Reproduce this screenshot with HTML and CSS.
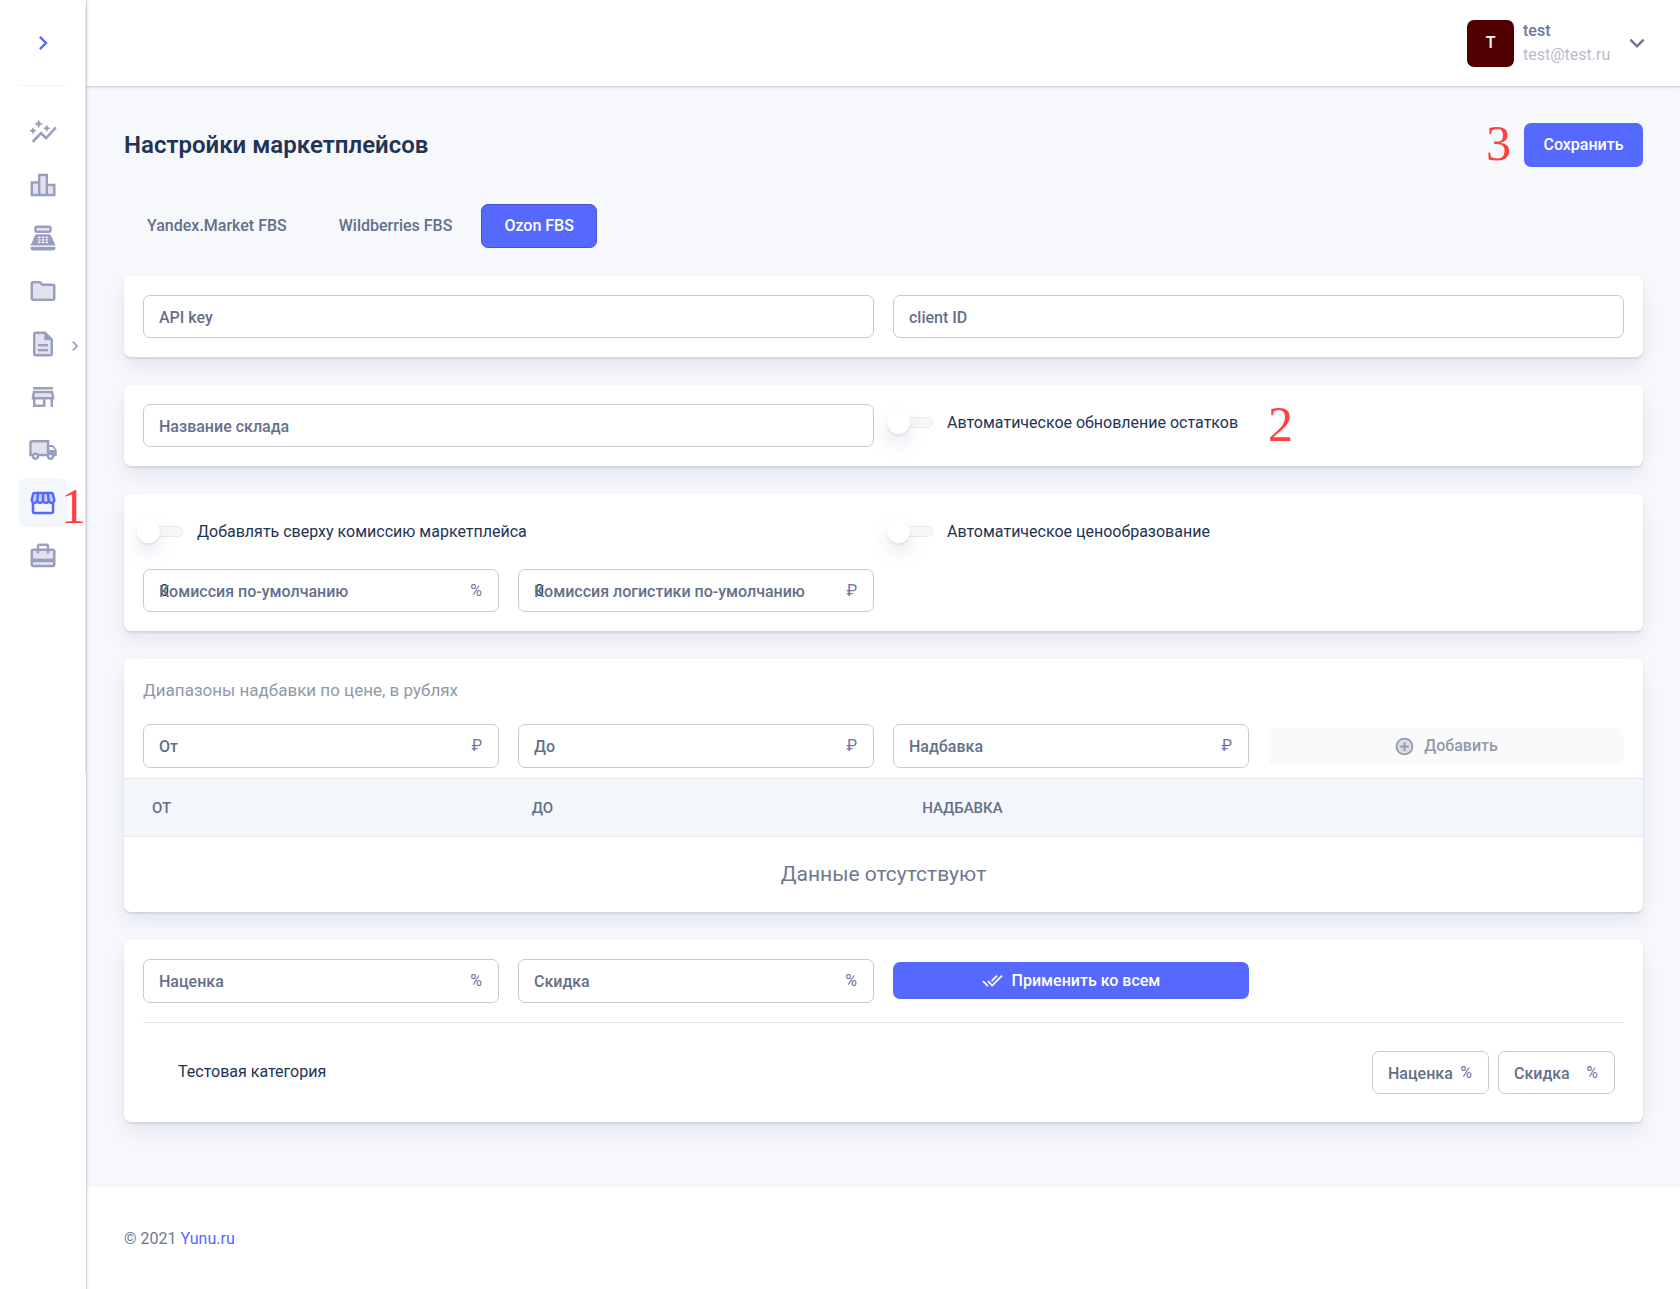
FILE: index.html
```html
<!DOCTYPE html>
<html lang="ru">
<head>
<meta charset="utf-8">
<meta name="viewport" content="width=device-width, initial-scale=1">
<title>Настройки маркетплейсов</title>
<link rel="stylesheet" href="styles.css">
</head>
<body>
<div class="app">
  <aside class="sidebar">
    <div class="sidebar-panel">
      <button class="sidebar-toggle" type="button" aria-label="Развернуть меню">
        <svg class="icon" viewBox="0 0 24 24"><path d="M8.6 7.4 10 6l6 6-6 6-1.400-1.400L13.200 12z"/></svg>
      </button>
      <nav class="menu">
        <a class="menu-item" href="#" aria-label="Аналитика"><svg class="icon" viewBox="0 0 24 24"><path d="M14.060 9.940 12 9l2.060-.94L15 6l.94 2.060L18 9l-2.060.94L15 12l-.94-2.060zM4 14l.94-2.060L7 11l-2.060-.94L4 8l-.94 2.060L1 11l2.060.94L4 14zm4.500-5 1.090-2.410L12 5.500 9.590 4.410 8.500 2 7.410 4.410 5 5.500l2.410 1.090L8.500 9zm-4 11.500 6-6.010 4 4L23 8.930l-1.410-1.410-7.090 7.970-4-4L3 19l1.500 1.500z"/></svg></a>
        <a class="menu-item" href="#" aria-label="Отчёты"><svg class="icon" viewBox="0 0 24 24"><path class="tone" d="M10 5h4v14h-4zM4 11h4v8H4zM16 13h4v6h-4z"/><path d="M16 11V3H8v6H2v12h20V11h-6zM8 19H4v-8h4v8zm6 0h-4V5h4v14zm6 0h-4v-6h4v6z"/></svg></a>
        <a class="menu-item" href="#" aria-label="Касса"><svg class="icon" viewBox="0 0 24 24"><path class="tone" d="M7 4h10v2H7z"/><path fill-rule="evenodd" d="M17 2H7c-1.100 0-2 .9-2 2v2c0 1.100.9 2 2 2h10c1.100 0 2-.9 2-2V4c0-1.100-.9-2-2-2zm0 4H7V4h10v2zm3 16H4c-1.100 0-2-.9-2-2v-1h20v1c0 1.100-.9 2-2 2zM18.530 10.190C18.210 9.470 17.490 9 16.700 9H7.300c-.79 0-1.510.47-1.830 1.190L2 18h20l-3.470-7.810zM8 11h2v1H8zM11 11h2v1h-2zM14 11h2v1h-2zM8 13h2v1H8zM11 13h2v1h-2zM14 13h2v1h-2zM8 15h2v1H8zM11 15h2v1h-2zM14 15h2v1h-2z"/></svg></a>
        <a class="menu-item" href="#" aria-label="Каталог"><svg class="icon" viewBox="0 0 24 24"><path class="tone" d="M11.170 8 9.170 6H4v12h16V8z"/><path d="M20 6h-8l-2-2H4c-1.100 0-1.990.9-1.990 2L2 18c0 1.100.9 2 2 2h16c1.100 0 2-.9 2-2V8c0-1.100-.9-2-2-2zm0 12H4V6h5.170l2 2H20v10z"/></svg></a>
        <a class="menu-item" href="#" aria-label="Документы"><svg class="icon" viewBox="0 0 24 24"><path class="tone" d="M13 4H6v16h12V9h-5V4zm3 14H8v-2h8v2zm0-6v2H8v-2h8z"/><path d="M8 16h8v2H8zm0-4h8v2H8zm6-10H6c-1.100 0-2 .9-2 2v16c0 1.100.89 2 1.990 2H18c1.100 0 2-.9 2-2V8l-6-6zm4 18H6V4h7v5h5v11z"/></svg><svg class="icon menu-arrow" viewBox="0 0 24 24"><path d="M8.600 7.400 10 6l6 6-6 6-1.400-1.400L13.200 12z"/></svg></a>
        <a class="menu-item" href="#" aria-label="Магазины"><svg class="icon" viewBox="0 0 24 24"><path class="tone" d="m5.640 9-.6 3h13.920l-.6-3z"/><path d="M4 4h16v2H4zm16 3H4l-1 5v2h1v6h10v-6h4v6h2v-6h1v-2l-1-5zm-8 11H6v-4h6v4zm-6.960-6 .6-3h12.720l.6 3H5.040z"/></svg></a>
        <a class="menu-item" href="#" aria-label="Доставка"><svg class="icon" viewBox="0 0 24 24"><path class="tone" d="M3 15h.78c.55-.61 1.340-1 2.220-1s1.670.39 2.220 1H15V6H3v9z"/><path d="M20 8h-3V4H3c-1.100 0-2 .9-2 2v11h2c0 1.660 1.340 3 3 3s3-1.340 3-3h6c0 1.660 1.340 3 3 3s3-1.340 3-3h2v-5l-3-4zM6 18c-.55 0-1-.45-1-1s.45-1 1-1 1 .45 1 1-.45 1-1 1zm9-3H8.220c-.55-.61-1.330-1-2.220-1s-1.670.39-2.220 1H3V6h12v9zm3 3c-.55 0-1-.45-1-1s.45-1 1-1 1 .45 1 1-.45 1-1 1zm-1-6V9.500h2.500l1.960 2.500H17z"/></svg></a>
        <a class="menu-item active" href="#" aria-label="Маркетплейсы"><svg class="icon" viewBox="0 0 24 24"><path class="tone" d="M5 5h14l1 5-1 1.500h-2.500L15 11h-6l-1.500.5H5L4 10z"/><path d="m21.900 8.890-1.050-4.370c-.22-.9-1-1.520-1.910-1.520H5.050c-.9 0-1.690.63-1.900 1.520L2.100 8.890c-.24 1.020-.02 2.060.62 2.880.08.11.19.19.28.29V19c0 1.100.9 2 2 2h14c1.100 0 2-.9 2-2v-6.940c.09-.09.2-.18.28-.28.64-.82.87-1.870.62-2.890zm-2.990-3.900 1.050 4.370c.1.42.01.84-.25 1.170-.14.18-.44.47-.94.47-.61 0-1.140-.49-1.210-1.140L16.980 5l1.930-.01zM13 5h1.960l.54 4.520c.05.39-.07.78-.33 1.070-.22.26-.54.41-.95.41-.67 0-1.220-.59-1.220-1.310V5zM8.490 9.520 9.040 5H11v4.690c0 .72-.55 1.310-1.290 1.310-.34 0-.65-.15-.89-.41-.25-.29-.37-.68-.33-1.070zm-4.450-.16L5.050 5h1.970l-.58 4.860c-.08.65-.6 1.140-1.210 1.140-.49 0-.8-.29-.93-.47-.27-.32-.36-.75-.26-1.170zM5 19v-6.030c.08.01.15.03.23.03.87 0 1.660-.36 2.240-.95.6.6 1.400.95 2.310.95.87 0 1.650-.36 2.230-.93.59.57 1.390.93 2.290.93.84 0 1.640-.35 2.240-.95.58.59 1.370.95 2.240.95.08 0 .15-.02.23-.03V19H5z"/></svg><span class="mark mark-menu">1</span></a>
        <a class="menu-item" href="#" aria-label="Поставки"><svg class="icon" viewBox="0 0 24 24"><path class="tone" d="M4 17h16v2H4zM4 14V8h16v6z"/><path d="M20 6h-3V4c0-1.110-.89-2-2-2H9c-1.110 0-2 .89-2 2v2H4c-1.110 0-2 .89-2 2v11c0 1.110.89 2 2 2h16c1.110 0 2-.89 2-2V8c0-1.110-.89-2-2-2zM9 4h6v2H9V4zm11 15H4v-2h16v2zm0-5H4V8h3v2h2V8h6v2h2V8h3v6z"/></svg></a>
      </nav>
    </div>
  </aside>

  <div class="page">
    <header class="header">
      <button class="user" type="button">
        <span class="avatar">T</span>
        <span class="user-text"><span class="user-name">test</span><span class="user-mail">test@test.ru</span></span>
        <svg class="icon" viewBox="0 0 24 24"><path d="M7.400 8.600 6 10l6 6 6-6-1.400-1.400L12 13.200z"/></svg>
      </button>
    </header>

    <main class="content">
      <div class="title-row">
        <h1>Настройки маркетплейсов</h1>
        <button class="btn btn-save" type="button">Сохранить<span class="mark mark-save">3</span></button>
      </div>

      <div class="tabs" role="tablist">
        <button class="tab" type="button" role="tab">Yandex.Market FBS</button>
        <button class="tab" type="button" role="tab">Wildberries FBS</button>
        <button class="tab active" type="button" role="tab" aria-selected="true">Ozon FBS</button>
      </div>

      <section class="card grid">
        <div class="field wide"><input id="api" type="text"><label for="api">API key</label></div>
        <div class="field wide"><input id="client" type="text"><label for="client">client ID</label></div>
      </section>

      <section class="card grid">
        <div class="field wide"><input id="stock" type="text"><label for="stock">Название склада</label></div>
        <label class="switch wide"><input type="checkbox"><span class="switch-text">Автоматическое обновление остатков<span class="mark mark-stock">2</span></span></label>
      </section>

      <section class="card grid">
        <label class="switch wide"><input type="checkbox"><span class="switch-text">Добавлять сверху комиссию маркетплейса</span></label>
        <label class="switch wide"><input type="checkbox"><span class="switch-text">Автоматическое ценообразование</span></label>
        <div class="field"><input id="fee" type="text" value="0"><label for="fee">Комиссия по-умолчанию</label><span class="unit">%</span></div>
        <div class="field"><input id="logistics" type="text" value="0"><label for="logistics">Комиссия логистики по-умолчанию</label><span class="unit">₽</span></div>
      </section>

      <section class="card card-table">
        <h2>Диапазоны надбавки по цене, в рублях</h2>
        <div class="grid form-row">
          <div class="field"><input id="from" type="text"><label for="from">От</label><span class="unit">₽</span></div>
          <div class="field"><input id="to" type="text"><label for="to">До</label><span class="unit">₽</span></div>
          <div class="field"><input id="extra" type="text"><label for="extra">Надбавка</label><span class="unit">₽</span></div>
          <button class="btn btn-row" type="button" disabled><svg class="icon" viewBox="0 0 24 24"><path class="tone" d="M12 4a8 8 0 1 0 0 16 8 8 0 0 0 0-16z"/><path d="M12 2C6.480 2 2 6.480 2 12s4.480 10 10 10 10-4.480 10-10S17.520 2 12 2zm0 18c-4.410 0-8-3.590-8-8s3.590-8 8-8 8 3.590 8 8-3.590 8-8 8zm1-13h-2v4H7v2h4v4h2v-4h4v-2h-4z"/></svg>Добавить</button>
        </div>
        <table>
          <thead><tr><th>От</th><th>До</th><th>Надбавка</th></tr></thead>
          <tbody><tr><td colspan="3">Данные отсутствуют</td></tr></tbody>
        </table>
      </section>

      <section class="card">
        <div class="grid form-row">
          <div class="field"><input id="markup" type="text"><label for="markup">Наценка</label><span class="unit">%</span></div>
          <div class="field"><input id="discount" type="text"><label for="discount">Скидка</label><span class="unit">%</span></div>
          <button class="btn btn-row" type="button"><svg class="icon" viewBox="0 0 24 24"><path d="m18 7-1.410-1.410-6.340 6.340 1.410 1.410L18 7zm4.240-1.410L11.660 16.170 7.480 12l-1.410 1.410L11.660 19l12-12-1.420-1.410zM.41 13.410 6 19l1.410-1.410L1.830 12 .41 13.410z"/></svg>Применить ко всем</button>
        </div>
        <div class="category">
          <span class="category-name">Тестовая категория</span>
          <div class="field small"><input id="cat-markup" type="text"><label for="cat-markup">Наценка</label><span class="unit">%</span></div>
          <div class="field small"><input id="cat-discount" type="text"><label for="cat-discount">Скидка</label><span class="unit">%</span></div>
        </div>
      </section>
    </main>

    <footer class="footer">© 2021 <a href="#">Yunu.ru</a></footer>
  </div>
</div>
</body>
</html>
```
FILE: styles.css
```css
*, *::before, *::after { box-sizing: border-box; }

body {
  margin: 0;
  background: #fff;
  color: #223354;
  font: 400 16px/20px Roboto, "Liberation Sans", sans-serif;
}

button, input { font: inherit; color: inherit; }
button { border: 0; background: none; padding: 0; cursor: pointer; }
a { color: #5569ff; text-decoration: none; }

.icon { display: block; flex: none; fill: currentColor; }
.tone { opacity: .3; }

.app { display: grid; grid-template-columns: 86px minmax(0, 1fr); min-height: 100vh; }

/* Sidebar */
.sidebar {
  position: relative;
  z-index: 2;
  background: #fff;
  box-shadow: 2px 0 3px rgba(159, 162, 191, .18), 1px 0 1px rgba(159, 162, 191, .32);
}
.sidebar-panel {
  padding: 0 18px 198px 19px;
  border-right: 1px solid #e4e5f0;
  border-radius: 0 7px 7px 0;
}
.sidebar-toggle {
  display: flex;
  align-items: center;
  justify-content: center;
  width: 100%;
  height: 86px;
  border-bottom: 1px solid #f2f3fa;
  color: #5569ff;
}
.sidebar-toggle .icon { width: 28px; }
.menu { display: grid; gap: 4px; padding-top: 21px; }
.menu-item {
  position: relative;
  display: flex;
  align-items: center;
  justify-content: center;
  height: 49px;
  border-radius: 7px;
  color: #999ec0;
}
.menu-item .icon { width: 30px; }
.menu-item.active { background: #f3f7fb; color: #5569ff; }
.menu-item .menu-arrow { position: absolute; left: 46px; top: 17px; width: 20px; }

/* Step numbers laid over the interface */
.mark {
  position: absolute;
  color: #ff4040;
  font: 400 50px/50px "Liberation Serif", serif;
}
.mark-menu { left: 42px; top: 3px; }
.mark-save { right: 132px; top: -5px; }
.mark-stock { left: 100%; top: -14px; margin-left: 30px; }

/* Header */
.page { display: flex; flex-direction: column; min-width: 0; background: #f6f8fc; }
.header {
  display: flex;
  justify-content: flex-end;
  align-items: center;
  height: 86px;
  padding: 0 28px;
  background: #fff;
  box-shadow: 0 2px 3px rgba(159, 162, 191, .18), 0 1px 1px rgba(159, 162, 191, .32);
}
.user { display: flex; align-items: center; text-align: left; color: #6e759f; }
.user .icon { width: 30px; margin-left: 9px; }
.avatar {
  display: grid;
  place-items: center;
  width: 47px;
  height: 47px;
  margin-right: 9px;
  border-radius: 7px;
  background: #500000;
  color: #fff;
  font-weight: 500;
}
.user-text { display: grid; min-width: 90px; line-height: 24px; }
.user-name { font-weight: 500; }
.user-mail { color: #b7bad2; }

/* Content */
.content { flex: 1; padding: 37px 37px 65px 38px; }
.title-row { display: flex; justify-content: space-between; align-items: center; height: 44px; }
h1 { margin: 0; font-size: 24px; line-height: 30px; font-weight: 600; }

.btn {
  display: flex;
  align-items: center;
  justify-content: center;
  border-radius: 7px;
  background: #5569ff;
  color: #fff;
  font-weight: 500;
}
.btn-save { position: relative; width: 119px; height: 44px; }
.btn-row { align-self: center; gap: 9px; height: 37px; }
.btn-row .icon { width: 21px; }
.btn:disabled { background: #fafafb; color: #9099a9; cursor: default; }

.tabs { display: flex; gap: 6px; margin: 37px 0 28px; }
.tab {
  height: 44px;
  padding: 0 22px;
  border: 1px solid transparent;
  border-radius: 7px;
  color: #64708a;
  font-weight: 500;
}
.tab.active { border-color: #4454cc; background: #5569ff; color: #fff; }

.card {
  margin-bottom: 28px;
  padding: 19px;
  border-radius: 7px;
  background: #fff;
  box-shadow: 0 10px 18px rgba(159, 162, 191, .18), 0 2px 2px rgba(159, 162, 191, .32);
}
.card:last-child { margin-bottom: 0; }
.grid { display: grid; grid-template-columns: repeat(4, minmax(0, 1fr)); gap: 19px; }
.wide { grid-column: span 2; }

/* Text fields */
.field { position: relative; height: 43px; }
.form-row .field { height: 44px; }
.field input {
  width: 100%;
  height: 100%;
  padding: 0 16px;
  border: 1px solid #c9cacd;
  border-radius: 7px;
  background: transparent;
  outline: 0;
}
.field label {
  position: absolute;
  left: 16px;
  top: 13px;
  color: #64708a;
  font-weight: 500;
  white-space: nowrap;
  pointer-events: none;
}
.unit { position: absolute; right: 17px; top: 12px; color: #6e759f; }
.field.small { width: 117px; }

/* Switches */
.switch { display: flex; align-items: center; gap: 14px; height: 37px; }
.switch input {
  position: relative;
  width: 40px;
  height: 11px;
  margin: 0;
  border: 1px solid #e8e9ee;
  border-radius: 6px;
  background: #f8f8fa;
  appearance: none;
}
.switch input::before {
  content: "";
  position: absolute;
  left: -7px;
  top: -7px;
  width: 23px;
  height: 23px;
  border-radius: 50%;
  background: #fff;
  box-shadow: 0 10px 18px rgba(159, 162, 191, .24), 0 2px 2px rgba(159, 162, 191, .24);
}
.switch-text { position: relative; }

/* Price ranges */
.card-table { padding: 0; overflow: hidden; }
.card-table h2 { margin: 0; padding: 20px 19px 23px; color: #9099a9; font-size: 17px; line-height: 22px; font-weight: 400; }
.card-table .grid { padding: 0 19px 10px; }
table { width: 100%; border-collapse: collapse; table-layout: fixed; }
th {
  height: 58px;
  padding: 0 28px;
  border: solid #e6eaef;
  border-width: 1px 0;
  background: #f3f7fb;
  color: #64708a;
  font-size: 15px;
  font-weight: 500;
  text-align: left;
  text-transform: uppercase;
}
th:nth-child(1) { width: 25%; }
th:nth-child(2) { width: 25.7%; }
td { height: 75px; padding: 0; color: #6e7990; font-size: 21px; text-align: center; }

/* Categories */
.category {
  display: flex;
  align-items: center;
  gap: 9px;
  margin-top: 19px;
  padding: 28px 9px 9px 35px;
  border-top: 1px solid #e8e9ee;
}
.category-name { flex: 1; }

.footer { padding: 42px 37px 41px 38px; background: #fff; color: #6e7990; }
```
